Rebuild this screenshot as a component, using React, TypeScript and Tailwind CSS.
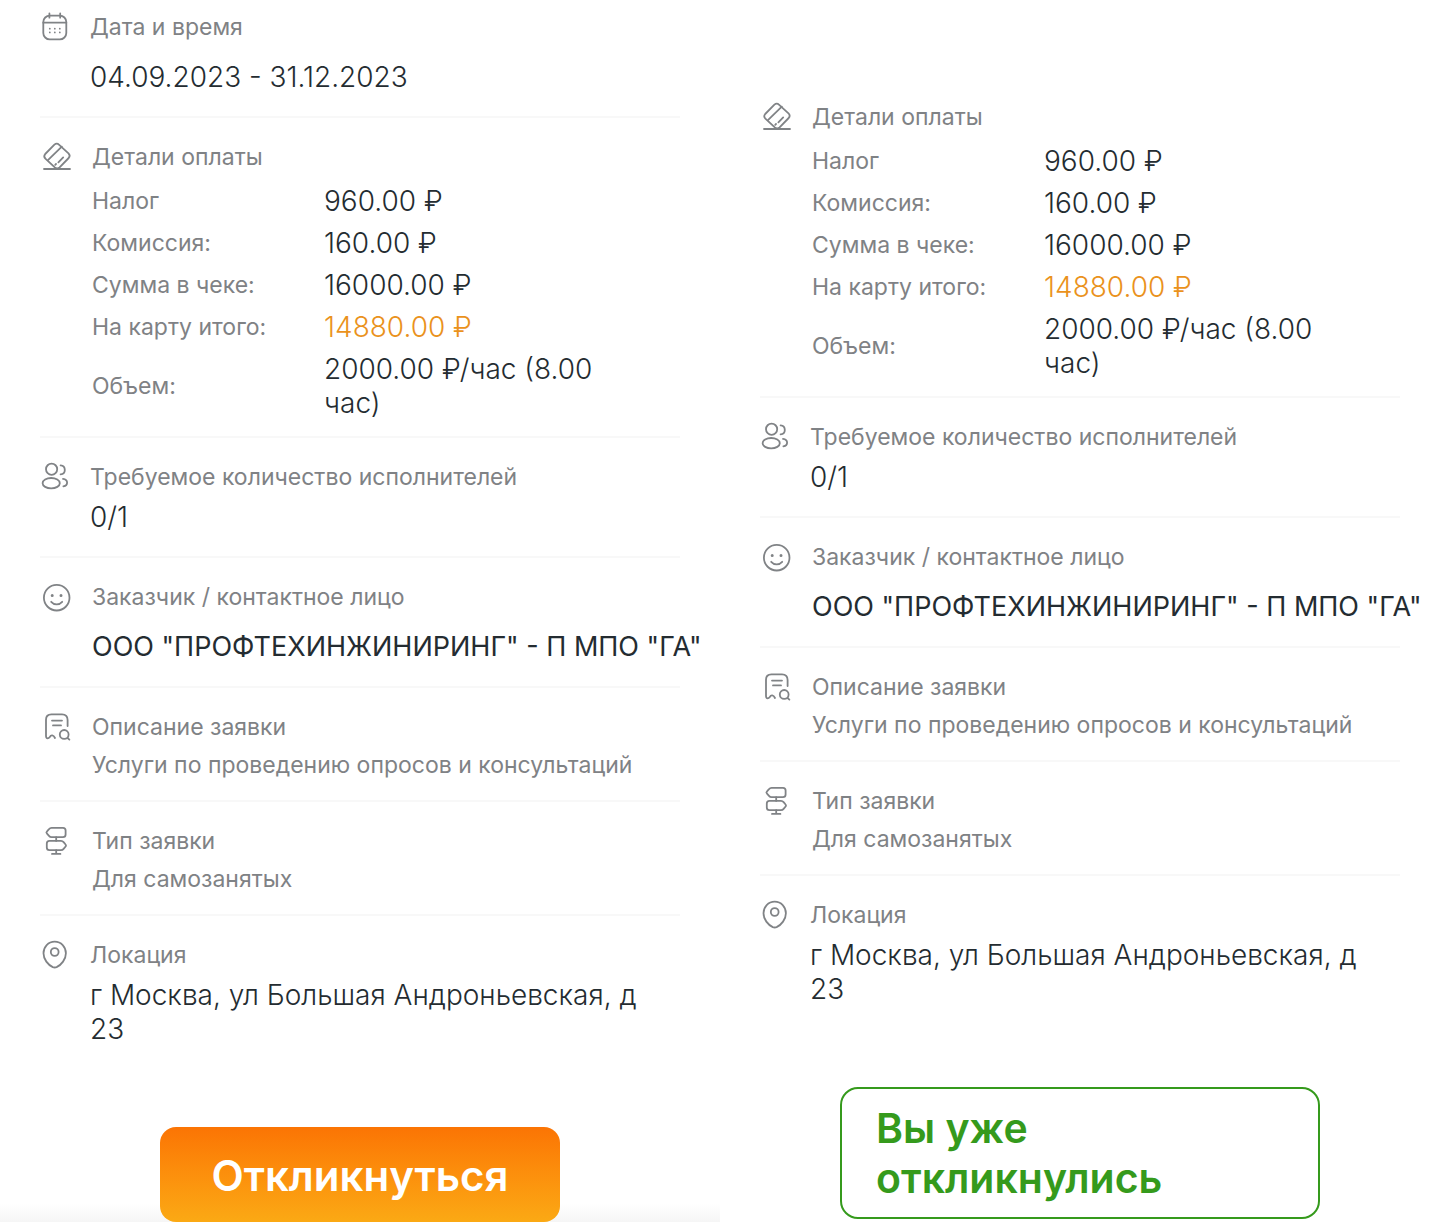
import type { ReactNode } from 'react'

const paymentRows = [
  { label: 'Налог', value: '960.00 ₽' },
  { label: 'Комиссия:', value: '160.00 ₽' },
  { label: 'Сумма в чеке:', value: '16000.00 ₽' },
  { label: 'На карту итого:', value: '14880.00 ₽', accent: true },
  { label: 'Объем:', value: '2000.00 ₽/час (8.00 час)' },
]

function Icon({ children }: { children: ReactNode }) {
  return (
    <svg
      viewBox="0 0 32 32"
      className="size-8 shrink-0"
      fill="none"
      stroke="#808386"
      strokeWidth="1.8"
      strokeLinecap="round"
      strokeLinejoin="round"
      aria-hidden="true"
    >
      {children}
    </svg>
  )
}

function CalendarIcon() {
  return (
    <Icon>
      <rect x="3.3" y="4.6" width="23" height="23.8" rx="6.5" />
      <path d="M3.3 11.7h23M9.4 2.4v4.3M20.2 2.4v4.3" />
      <path d="M9.8 17.7h.01M14.8 17.7h.01M19.8 17.7h.01M9.8 21.4h.01M14.8 21.4h.01M19.8 21.4h.01" />
    </Icon>
  )
}

function PaymentIcon() {
  return (
    <Icon>
      <path d="M4 28h26" />
      <path d="M5.2 13 14.4 3.6q2.4-2 4.8.2l9.3 8.6q2.2 2.2.2 4.6l-9.1 9.4q-2.4 2-4.8 0l-9.4-8.8q-2.2-2.2-.2-4.6z" />
      <path d="M8.2 18.8 21.8 5.6M18.4 21.4l4.8-5M15.2 23.8l.8-.8" />
    </Icon>
  )
}

function PeopleIcon() {
  return (
    <Icon>
      <circle cx="11.6" cy="8.2" r="5.6" />
      <ellipse cx="11.2" cy="22.2" rx="8.6" ry="5.2" />
      <path d="M20.6 4.4c5.6.6 5.6 8.4 0 9M23 17.8c5.4.8 5.4 6.6.4 7.6" />
    </Icon>
  )
}

function SmileIcon() {
  return (
    <Icon>
      <circle cx="16.7" cy="16.7" r="12.8" />
      <path d="M11.2 20.8c3 3.4 8 3.4 11 0" />
      <path strokeWidth="3" d="M12.2 14.6h.01M21 14.6h.01" />
    </Icon>
  )
}

function DescriptionIcon() {
  return (
    <Icon>
      <path d="M15 27c-1.6-3.4-4-3.4-5.2-1-1 1.4-3.8 2.4-3.8-1V8.8q0-5.4 5.4-5.4H22q5.6 0 5.6 5.6v6" />
      <path d="M12 9.6h10M13 14.4h8" />
      <circle cx="24.2" cy="23.4" r="4.4" />
      <path d="m27.6 27 1.8 1.6" />
    </Icon>
  )
}

function SignpostIcon() {
  return (
    <Icon>
      <path d="M11.6 2.9H23q2.6 0 2.6 2.6v4q0 2.6-2.6 2.6H11.6q-1.6 0-2.6-1.2L7 8.7q-1.2-1.2 0-2.4L9 4.1q1-1.2 2.6-1.2z" />
      <path d="M9.4 15.9H21q1.6 0 2.6 1.2l1.8 2.2q1.2 1.2 0 2.4l-1.8 2.2q-1 1.2-2.6 1.2H9.4q-2.6 0-2.6-2.6v-4q0-2.6 2.6-2.6z" />
      <path d="M16.2 12.1v3.8M16.2 25.1v3.6M12 28.9h8.4" />
    </Icon>
  )
}

function LocationIcon() {
  return (
    <Icon>
      <path d="M14.7 2.7C8.2 2.7 3.5 7.8 3.5 14.2c0 6.2 4.5 11.6 9.3 13.9q1.9.8 3.8 0c4.8-2.3 9.3-7.7 9.3-13.9 0-6.4-4.7-11.5-11.2-11.5z" />
      <circle cx="14.7" cy="13" r="3.9" />
    </Icon>
  )
}

type SectionProps = {
  icon: ReactNode
  title: string
  children: ReactNode
  narrow?: boolean
  className?: string
}

function Section({ icon, title, children, narrow = false, className = 'pt-6' }: SectionProps) {
  return (
    <section className={`border-b-2 border-[#f8f8f8] last:border-0 ${className}`}>
      <div className="flex h-[30px] items-center">
        {icon}
        <h2
          className={`${narrow ? 'ml-[18px]' : 'ml-5'} whitespace-nowrap text-[23px] font-normal leading-[30px] text-[#7f8285]`}
        >
          {title}
        </h2>
      </div>
      <div className={narrow ? 'pl-[50px]' : 'pl-[52px]'}>{children}</div>
    </section>
  )
}

function Details({ withDate = false }: { withDate?: boolean }) {
  return (
    <div className="text-[28px] font-[330] leading-[34px] text-[#242c31]">
      {withDate && (
        <Section icon={<CalendarIcon />} title="Дата и время" className="pt-3" narrow>
          <p className="mt-[18px] pb-[22px]">04.09.2023 - 31.12.2023</p>
        </Section>
      )}

      <Section icon={<PaymentIcon />} title="Детали оплаты" className={withDate ? 'pt-6' : 'pt-[102px]'}>
        <dl className="mt-3 space-y-2 pb-4">
          {paymentRows.map((row) => (
            <div key={row.label} className="flex items-center">
              <dt className="w-[232px] shrink-0 text-[23px] font-normal text-[#7f8285]">{row.label}</dt>
              <dd className={row.accent ? 'pr-10 text-[#ea921c]' : 'pr-10'}>{row.value}</dd>
            </div>
          ))}
        </dl>
      </Section>

      <Section icon={<PeopleIcon />} title="Требуемое количество исполнителей" narrow>
        <p className="mt-2 pb-[22px]">0/1</p>
      </Section>

      <Section icon={<SmileIcon />} title="Заказчик / контактное лицо">
        <p className="mt-[18px] whitespace-nowrap pb-[22px] text-[27px] font-normal">
          ООО "ПРОФТЕХИНЖИНИРИНГ" - П МПО "ГА"
        </p>
      </Section>

      <Section icon={<DescriptionIcon />} title="Описание заявки">
        <p className="mt-2 pb-5 text-[23px] font-normal leading-[30px] text-[#7f8285]">
          Услуги по проведению опросов и консультаций
        </p>
      </Section>

      <Section icon={<SignpostIcon />} title="Тип заявки">
        <p className="mt-2 pb-5 text-[23px] font-normal leading-[30px] text-[#7f8285]">Для самозанятых</p>
      </Section>

      <Section icon={<LocationIcon />} title="Локация" narrow>
        <p className="mt-2 pr-5">г Москва, ул Большая Андроньевская, д 23</p>
      </Section>
    </div>
  )
}

export default function App() {
  return (
    <main className="grid grid-cols-[720fr_710fr] overflow-hidden bg-white font-['Inter',sans-serif]">
      <div className="min-w-0">
        <div className="px-10">
          <Details withDate />
        </div>
        <div className="mt-[81px] flex justify-center bg-linear-to-b from-white from-80% to-[#f6f6f6]">
          <button
            type="button"
            className="h-[95px] w-[400px] rounded-2xl bg-linear-to-b from-[#fb7404] to-[#fba914] pt-0.5 text-[42px] font-semibold text-white"
          >
            Откликнуться
          </button>
        </div>
      </div>

      <div className="min-w-0 pl-10 pr-[30px]">
        <Details />
        <div className="mt-[81px] flex justify-center">
          <button
            type="button"
            className="w-[480px] rounded-[18px] border-2 border-[#359a1c] py-3.5 pl-[34px] pr-24 text-left text-[41px] font-semibold leading-[50px] text-[#359a1c]"
          >
            Вы уже откликнулись
          </button>
        </div>
      </div>
    </main>
  )
}
